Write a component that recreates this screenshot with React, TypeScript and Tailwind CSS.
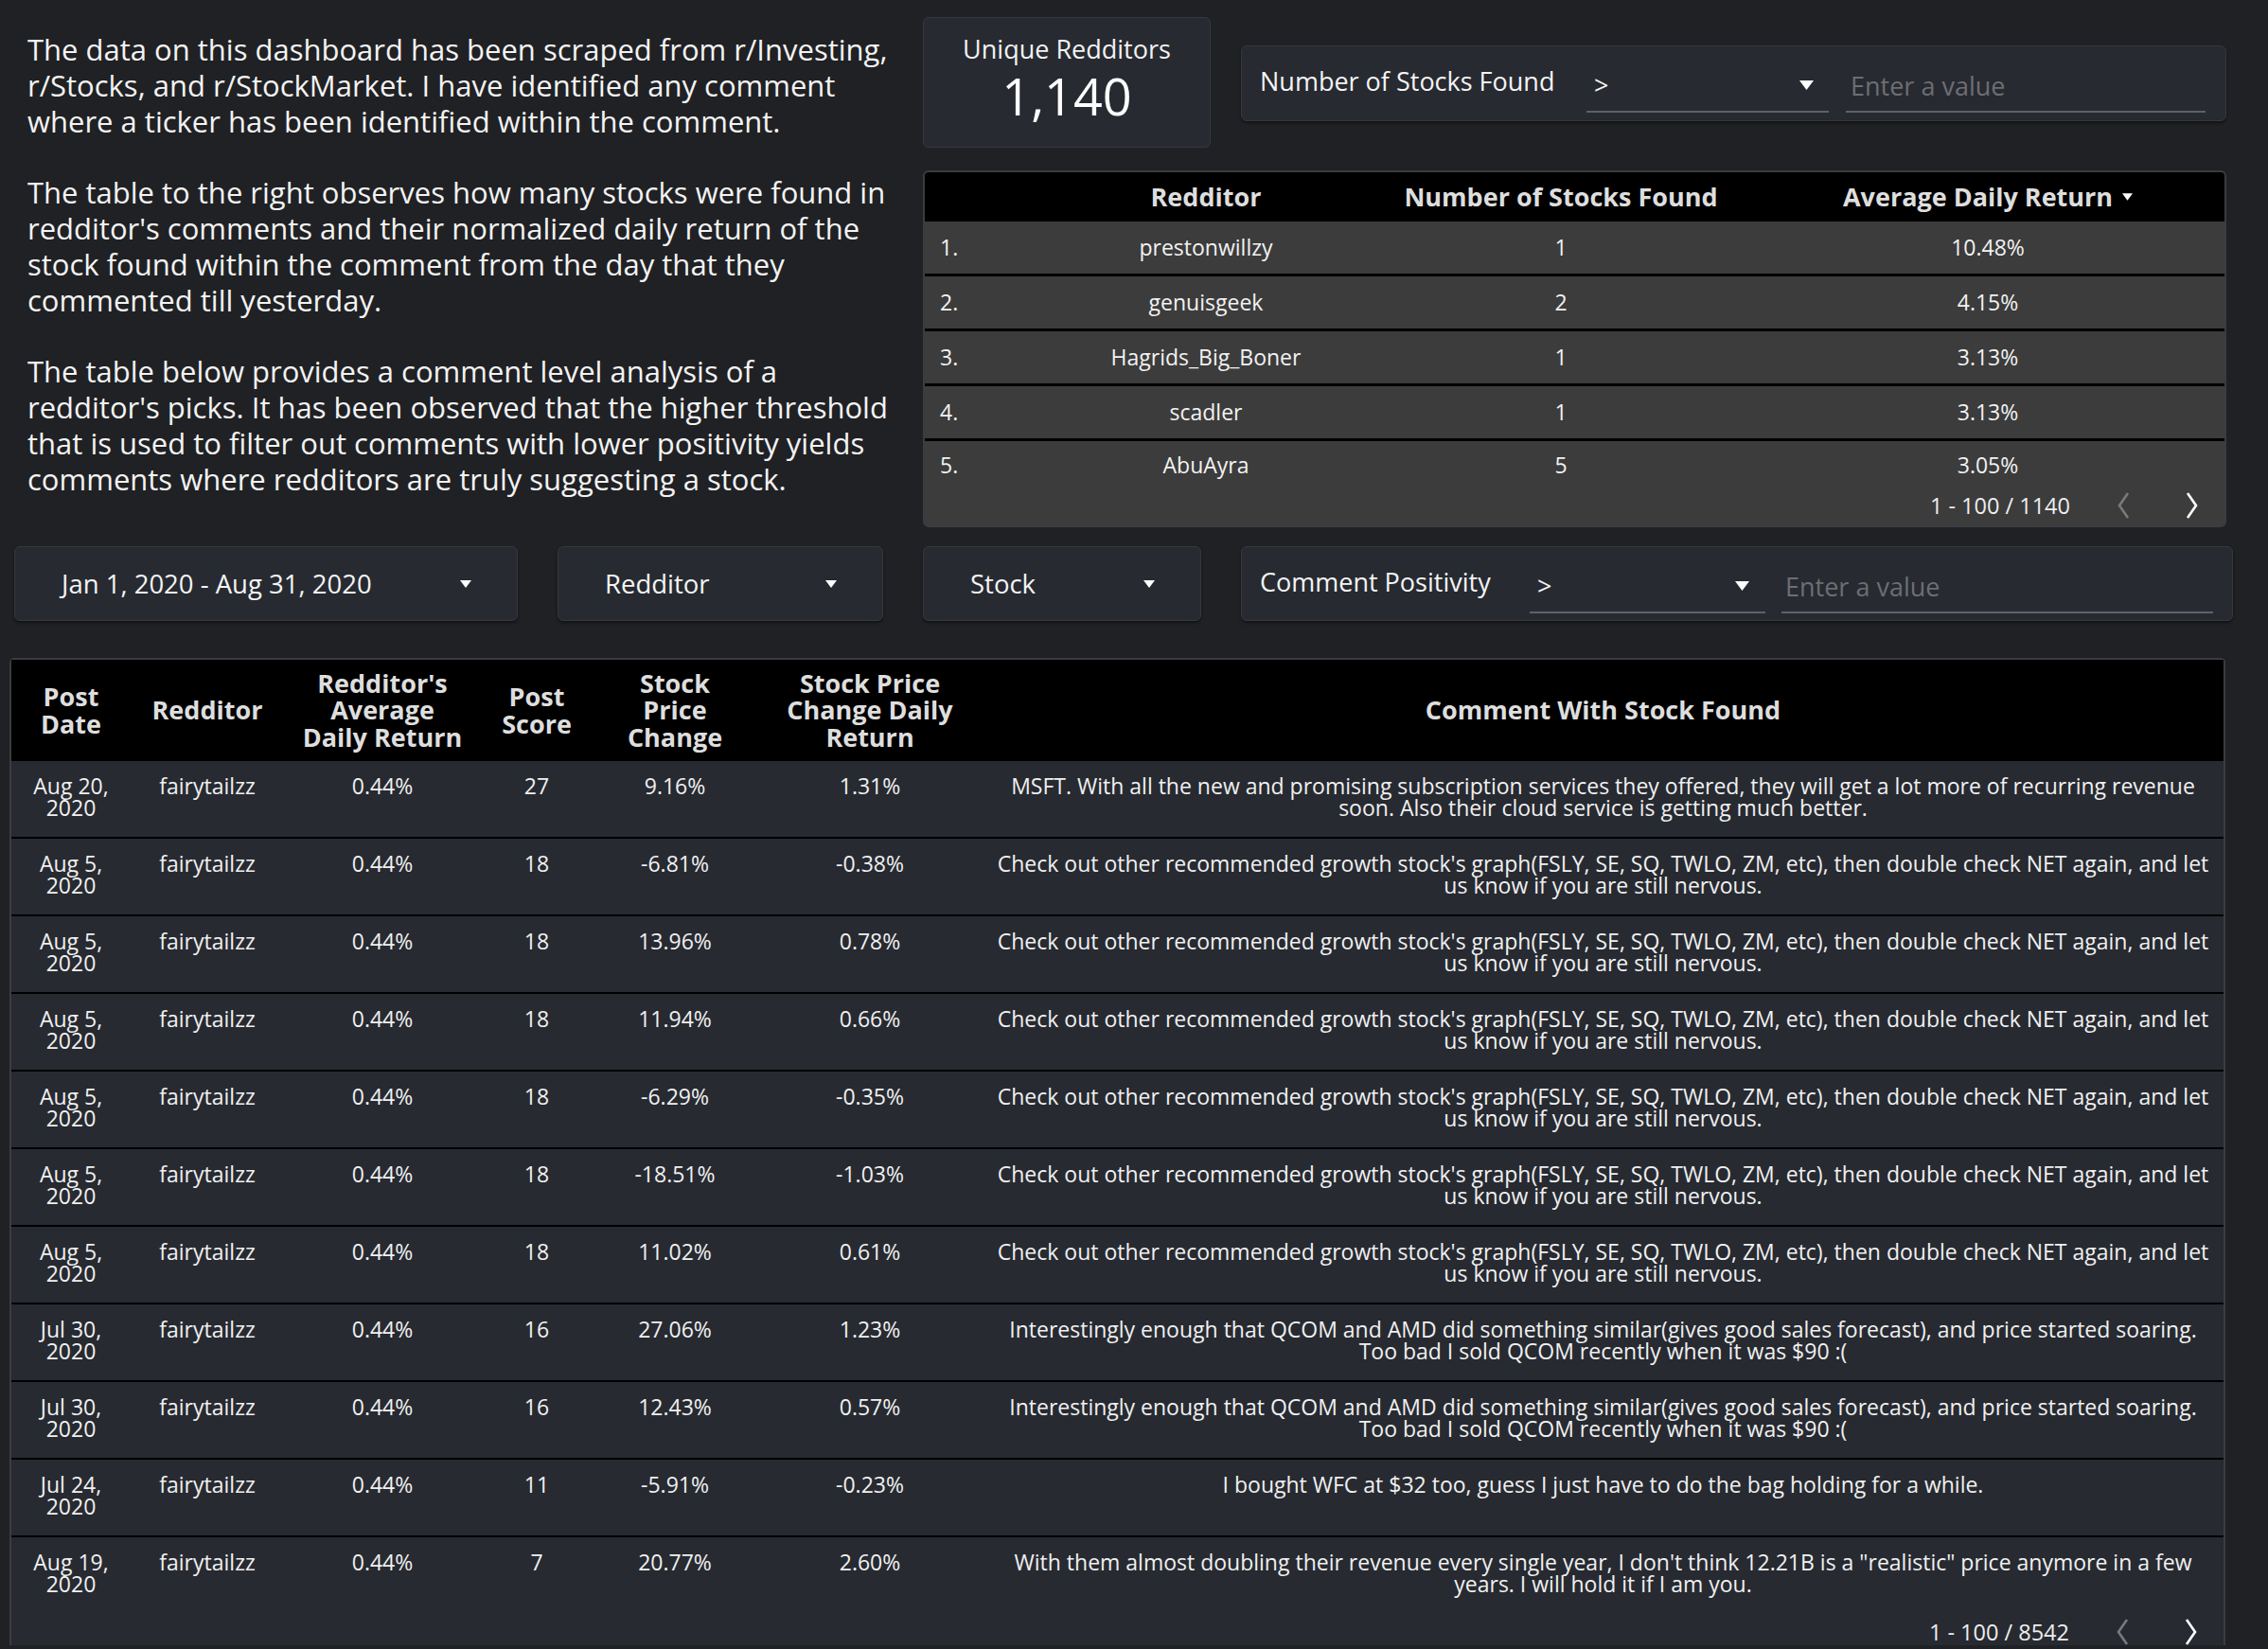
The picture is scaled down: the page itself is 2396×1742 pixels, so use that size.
import React from "react";

const Tri = ({ w = 12, h = 8 }: { w?: number; h?: number }) => (
  <svg width={w} height={h} viewBox="0 0 12 8" className="shrink-0">
    <path d="M0 0 L12 0 L6 8 Z" fill="#ffffff" />
  </svg>
);

const ChevL = () => (
  <svg width="14" height="28" viewBox="0 0 14 28" className="shrink-0">
    <polyline points="12,1 3,14 12,27" fill="none" stroke="#7a7a7a" strokeWidth="2.6" />
  </svg>
);
const ChevR = () => (
  <svg width="14" height="28" viewBox="0 0 14 28" className="shrink-0">
    <polyline points="2,1 11,14 2,27" fill="none" stroke="#ffffff" strokeWidth="2.6" />
  </svg>
);

const intro = [
  "The data on this dashboard has been scraped from r/Investing,",
  "r/Stocks, and r/StockMarket. I have identified any comment",
  "where a ticker has been identified within the comment.",
  "",
  "The table to the right observes how many stocks were found in",
  "redditor's comments and their normalized daily return of the",
  "stock found within the comment from the day that they",
  "commented till yesterday.",
  "",
  "The table below provides a comment level analysis of a",
  "redditor's picks. It has been observed that the higher threshold",
  "that is used to filter out comments with lower positivity yields",
  "comments where redditors are truly suggesting a stock.",
];

const topRows = [
  ["1.", "prestonwillzy", "1", "10.48%"],
  ["2.", "genuisgeek", "2", "4.15%"],
  ["3.", "Hagrids_Big_Boner", "1", "3.13%"],
  ["4.", "scadler", "1", "3.13%"],
  ["5.", "AbuAyra", "5", "3.05%"],
];

const check = [
  "Check out other recommended growth stock's graph(FSLY, SE, SQ, TWLO, ZM, etc), then double check NET again, and let",
  "us know if you are still nervous.",
];
const qcom = [
  "Interestingly enough that QCOM and AMD did something similar(gives good sales forecast), and price started soaring.",
  "Too bad I sold QCOM recently when it was $90 :(",
];

const rows: { d: string; s: string; c: string; r: string; t: string[] }[] = [
  {
    d: "Aug 20,",
    s: "27",
    c: "9.16%",
    r: "1.31%",
    t: [
      "MSFT. With all the new and promising subscription services they offered, they will get a lot more of recurring revenue",
      "soon. Also their cloud service is getting much better.",
    ],
  },
  { d: "Aug 5,", s: "18", c: "-6.81%", r: "-0.38%", t: check },
  { d: "Aug 5,", s: "18", c: "13.96%", r: "0.78%", t: check },
  { d: "Aug 5,", s: "18", c: "11.94%", r: "0.66%", t: check },
  { d: "Aug 5,", s: "18", c: "-6.29%", r: "-0.35%", t: check },
  { d: "Aug 5,", s: "18", c: "-18.51%", r: "-1.03%", t: check },
  { d: "Aug 5,", s: "18", c: "11.02%", r: "0.61%", t: check },
  { d: "Jul 30,", s: "16", c: "27.06%", r: "1.23%", t: qcom },
  { d: "Jul 30,", s: "16", c: "12.43%", r: "0.57%", t: qcom },
  {
    d: "Jul 24,",
    s: "11",
    c: "-5.91%",
    r: "-0.23%",
    t: ["I bought WFC at $32 too, guess I just have to do the bag holding for a while."],
  },
  {
    d: "Aug 19,",
    s: "7",
    c: "20.77%",
    r: "2.60%",
    t: [
      'With them almost doubling their revenue every single year, I don\'t think 12.21B is a "realistic" price anymore in a few',
      "years. I will hold it if I am you.",
    ],
  },
];

const Dropdown = ({ label, w }: { label: string; w: string }) => (
  <div
    className={`${w} h-[79px] shrink-0 rounded-[6px] border border-[#36383d] bg-[#272a31] shadow-[0_2px_3px_rgba(0,0,0,0.45)] flex items-center justify-between pl-[49px] pr-[48px]`}
  >
    <span className="text-[27.5px] leading-[34px] text-[#f4f4f4] whitespace-nowrap">{label}</span>
    <Tri />
  </div>
);

const Pager = ({ text }: { text: string }) => (
  <div className="flex justify-end items-start pt-[4px] pr-[27px]">
    <span className="text-[23.5px] leading-[28px] text-[#eeeeee] whitespace-nowrap mr-[49px]">{text}</span>
    <ChevL />
    <span className="w-[59px]" />
    <ChevR />
  </div>
);

export default function App() {
  const gridMain = "grid grid-cols-[126px_162px_208px_118px_174px_238px_1fr]";
  const gridTop = "grid grid-cols-[123px_348px_402px_1fr]";
  return (
    <div className="w-[2396px] h-[1742px] overflow-hidden bg-[#202124] text-white font-['Open_Sans',sans-serif]">
      {/* top area */}
      <div className="flex">
        <div className="w-[975px] shrink-0 pl-[29px] pt-[34px] text-[31px] leading-[37.8px] text-[#f3f3f3]">
          {intro.map((l, i) => (
            <div key={i} className="whitespace-nowrap h-[37.8px]">
              {l}
            </div>
          ))}
        </div>
        <div className="w-[1377px] shrink-0">
          <div className="flex items-start">
            <div className="mt-[18px] w-[304px] h-[138px] rounded-[6px] border border-[#36383d] bg-[#272a31] flex flex-col items-center pt-[17px]">
              <div className="text-[27px] leading-[32px] text-[#f2f2f2]">Unique Redditors</div>
              <div className="text-[54px] leading-[64px] mt-[1px] text-white">1,140</div>
            </div>
            <div className="ml-[32px] mt-[48px] w-[1041px] h-[80px] rounded-[6px] border border-[#36383d] bg-[#272a31] shadow-[0_2px_3px_rgba(0,0,0,0.45)] flex">
              <div className="w-[364px] shrink-0 pl-[19px] pt-[19px] text-[27px] leading-[36px] text-[#f4f4f4] whitespace-nowrap">
                Number of Stocks Found
              </div>
              <div className="w-[256px] shrink-0 mt-[20px] h-[50px] border-b-2 border-[#606166] flex items-start justify-between pl-[8px] pr-[15px]">
                <span className="text-[27px] leading-[42px] text-[#f4f4f4]">&gt;</span>
                <span className="pt-[16px]">
                  <Tri w={17} h={10} />
                </span>
              </div>
              <div className="w-[380px] shrink-0 ml-[18px] mt-[20px] h-[50px] border-b-2 border-[#606166] pl-[5px]">
                <span className="text-[27px] leading-[44px] text-[#6d6e72]">Enter a value</span>
              </div>
            </div>
          </div>

          {/* top table */}
          <div className="mt-[24px] w-[1377px] h-[377px] rounded-[6px] border-2 border-[#3b3c40] bg-[#3c3c3c] overflow-hidden">
            <div className={`${gridTop} h-[52px] bg-black items-center font-bold text-[27px] text-[#dedede]`}>
              <div />
              <div className="text-center">Redditor</div>
              <div className="text-center">Number of Stocks Found</div>
              <div className="flex items-center justify-center gap-[10px]">
                <span>Average Daily Return</span>
                <Tri w={11} h={8} />
              </div>
            </div>
            {topRows.map((r, i) => (
              <div
                key={i}
                className={`${gridTop} items-center text-[23px] text-[#f2f2f2] ${
                  i < 4 ? "h-[58px] border-b-[3px] border-black" : "h-[50px]"
                }`}
              >
                <div className="pl-[16px]">{r[0]}</div>
                <div className="text-center">{r[1]}</div>
                <div className="text-center">{r[2]}</div>
                <div className="text-center">{r[3]}</div>
              </div>
            ))}
            <Pager text="1 - 100 / 1140" />
          </div>
        </div>
      </div>

      {/* filter row */}
      <div className="flex mt-[20px] pl-[15px] gap-[42px]">
        <Dropdown label="Jan 1, 2020 - Aug 31, 2020" w="w-[532px]" />
        <Dropdown label="Redditor" w="w-[344px]" />
        <Dropdown label="Stock" w="w-[294px]" />
        <div className="w-[1048px] h-[79px] shrink-0 rounded-[6px] border border-[#36383d] bg-[#272a31] shadow-[0_2px_3px_rgba(0,0,0,0.45)] flex">
          <div className="w-[304px] shrink-0 pl-[19px] pt-[19px] text-[27px] leading-[36px] text-[#f4f4f4] whitespace-nowrap">
            Comment Positivity
          </div>
          <div className="w-[249px] shrink-0 mt-[20px] h-[50px] border-b-2 border-[#606166] flex items-start justify-between pl-[8px] pr-[16px]">
            <span className="text-[27px] leading-[42px] text-[#f4f4f4]">&gt;</span>
            <span className="pt-[16px]">
              <Tri w={17} h={10} />
            </span>
          </div>
          <div className="w-[456px] shrink-0 ml-[17px] mt-[20px] h-[50px] border-b-2 border-[#606166] pl-[4px]">
            <span className="text-[27px] leading-[44px] text-[#6d6e72]">Enter a value</span>
          </div>
        </div>
      </div>

      {/* main table */}
      <div className="mt-[39px] ml-[10px] w-[2341px] rounded-t-[5px] border-2 border-b-0 border-[#3b3c40] bg-[#272a31]">
        <div className={`${gridMain} h-[107px] bg-black items-center font-bold text-[27px] leading-[28.5px] text-[#dedede] text-center`}>
          <div>
            Post
            <br />
            Date
          </div>
          <div>Redditor</div>
          <div>
            Redditor's
            <br />
            Average
            <br />
            Daily Return
          </div>
          <div>
            Post
            <br />
            Score
          </div>
          <div>
            Stock
            <br />
            Price
            <br />
            Change
          </div>
          <div>
            Stock Price
            <br />
            Change Daily
            <br />
            Return
          </div>
          <div>Comment With Stock Found</div>
        </div>
        {rows.map((r, i) => (
          <div
            key={i}
            className={`${gridMain} items-start text-center text-[23px] leading-[23px] text-[#f0f0f0] pt-[15px] ${
              i < rows.length - 1 ? "h-[82px] border-b-2 border-black" : "h-[82px]"
            }`}
          >
            <div>
              {r.d}
              <br />
              2020
            </div>
            <div>fairytailzz</div>
            <div>0.44%</div>
            <div>{r.s}</div>
            <div>{r.c}</div>
            <div>{r.r}</div>
            <div>
              {r.t.map((l, j) => (
                <div key={j} className="whitespace-nowrap">
                  {l}
                </div>
              ))}
            </div>
          </div>
        ))}
        <Pager text="1 - 100 / 8542" />
      </div>
    </div>
  );
}
